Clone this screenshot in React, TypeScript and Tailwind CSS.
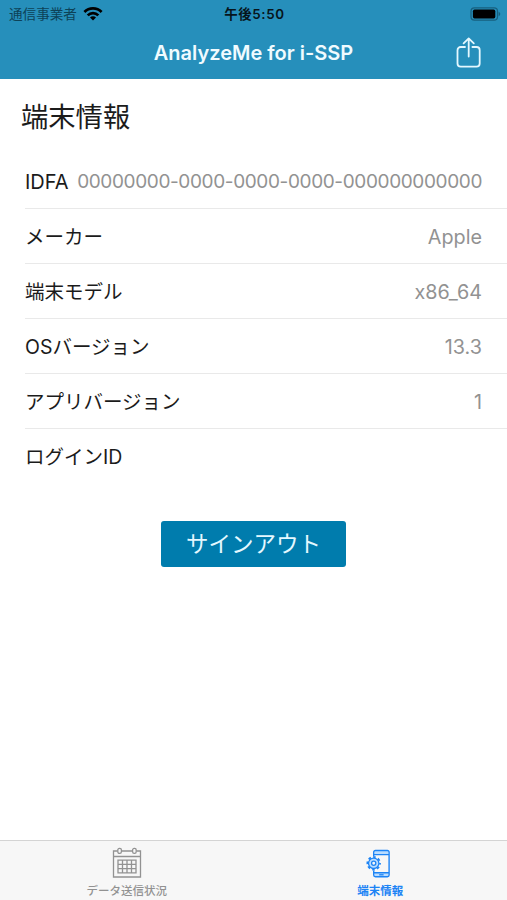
const rows = [
  { label: "IDFA", value: "00000000-0000-0000-0000-000000000000" },
  { label: "メーカー", value: "Apple" },
  { label: "端末モデル", value: "x86_64" },
  { label: "OSバージョン", value: "13.3" },
  { label: "アプリバージョン", value: "1" },
  { label: "ログインID", value: "" },
]

function WifiIcon() {
  return (
    <svg width="20" height="14" viewBox="0 0 20 14" fill="none" stroke="#000" strokeWidth="2.7">
      <path d="M1.4 5a12.2 12.2 0 0 1 17.2 0" />
      <path d="M4.7 8.4a7.5 7.5 0 0 1 10.6 0" />
      <path d="M10 13.6 7 10.6a4.2 4.2 0 0 1 6 0z" fill="#000" stroke="none" />
    </svg>
  )
}

function BatteryIcon() {
  return (
    <svg width="31" height="14" viewBox="0 0 31 14">
      <rect x="1" y="0.8" width="26.5" height="12.4" rx="3.4" fill="none" stroke="#17607f" strokeWidth="1.2" />
      <rect x="2.9" y="2.6" width="22.4" height="8.8" rx="1.6" fill="#000" />
      <path d="M28.6 4.8c2.2.9 2.2 3.5 0 4.4z" fill="#17607f" />
    </svg>
  )
}

function ShareIcon() {
  return (
    <svg width="26" height="32" viewBox="0 0 26 32" fill="none" stroke="#e4f8ff" strokeWidth="1.8" strokeLinecap="round" strokeLinejoin="round">
      <path d="M9 10H4.7A3.2 3.2 0 0 0 1.5 13.2v13.3a3.2 3.2 0 0 0 3.2 3.2h15.8a3.2 3.2 0 0 0 3.2-3.2V13.2a3.2 3.2 0 0 0-3.2-3.2H16.4" />
      <path d="M12.7 19.5V1.5M7.6 6.4l5.1-5 5.1 5" />
    </svg>
  )
}

function CalendarIcon() {
  return (
    <svg width="30" height="32" viewBox="0 0 30 32" fill="none" stroke="#929292" strokeWidth="1.3">
      <path d="M5.5 4H1.5v26h27V4h-4M9.5 4h11M1.5 9.5h27" />
      <rect x="5.8" y="1.4" width="3.6" height="5" rx="1.6" />
      <rect x="20.6" y="1.4" width="3.6" height="5" rx="1.6" />
      <path d="M6 13.2h18v12.6H6zM10.5 13.2v12.6M15 13.2v12.6M19.5 13.2v12.6M6 17.4h18M6 21.6h18" />
    </svg>
  )
}

function DeviceIcon() {
  return (
    <svg width="28" height="30" viewBox="0 0 28 30" fill="none" stroke="#1d84f5" strokeWidth="1.4">
      <path d="M8.5 1.8h13.8v3.6H8.5zM8.5 24h13.8v3.4H8.5z" fill="#b9dcff" stroke="none" />
      <path d="M7.7 7V3.2a1.7 1.7 0 0 1 1.7-1.7h12a1.7 1.7 0 0 1 1.7 1.7v22.8a1.7 1.7 0 0 1-1.7 1.7h-12A1.7 1.7 0 0 1 7.7 26v-4.4" />
      <path d="M7.9 5.6H23M7.9 23.8H23" />
      <path d="M13.2 25.8h4.4" strokeWidth="1.3" />
      <circle cx="7.7" cy="14.3" r="5.2" fill="#b9dcff" strokeWidth="1.3" />
      <circle cx="7.7" cy="14.3" r="2.1" fill="#f7f7f7" strokeWidth="1.3" />
      <circle cx="7.7" cy="14.3" r="6.3" strokeWidth="1.8" strokeDasharray="2.6 2.348" strokeDashoffset="1.3" />
    </svg>
  )
}

export default function App() {
  return (
    <div className="flex h-[900px] w-[507px] flex-col overflow-hidden bg-white font-['Inter','Noto_Sans_CJK_JP',sans-serif] text-[#1b1b1b]">
      <header className="h-[79px] shrink-0 bg-[#268fbb]">
        <div className="grid h-[27px] grid-cols-[1fr_auto_1fr] items-center pr-1.5 pl-[9px]">
          <div className="flex items-center gap-1.5">
            <span className="text-[13.6px] leading-5 text-[#0d4257]">通信事業者</span>
            <WifiIcon />
          </div>
          <span className="pr-px text-[13.4px] leading-5 font-semibold tracking-[0.6px] text-[#06151c]">午後5:50</span>
          <div className="flex justify-end">
            <BatteryIcon />
          </div>
        </div>
        <div className="grid h-[51px] grid-cols-[1fr_auto_1fr] items-center pr-[25px] pl-[25px]">
          <span />
          <h1 className="text-[20px] leading-6 font-semibold text-[#f0fbff]">AnalyzeMe for i-SSP</h1>
          <div className="flex justify-end">
            <ShareIcon />
          </div>
        </div>
      </header>

      <main className="flex grow flex-col">
        <h2 className="mt-[19px] ml-[21px] text-[27.3px] leading-10">端末情報</h2>
        <ul className="mt-4 ml-[25px]">
          {rows.map((row) => (
            <li
              key={row.label}
              className="group flex h-[55px] items-center justify-between border-b border-[#e9e9e9] pt-px pr-[25px] last:border-b-0"
            >
              <span className="text-[19.5px] leading-7 whitespace-nowrap group-first:text-[20px]">{row.label}</span>
              <span className="text-[19.8px] leading-7 whitespace-nowrap text-[#929292] group-first:text-[19px] group-first:tracking-[-0.38px]">
                {row.value}
              </span>
            </li>
          ))}
        </ul>
        <button className="mx-auto mt-[37px] h-[46px] w-[185px] rounded-[3px] bg-[#007cad] text-[22.5px] leading-[46px] text-[#e4f8ff]">
          サインアウト
        </button>
      </main>

      <nav className="grid h-[60px] shrink-0 grid-cols-2 border-t border-[#d4d4d4] bg-[#f7f7f7] text-[11.5px]">
        <div className="flex flex-col items-center pt-1.5 text-[#929292]">
          <CalendarIcon />
          <span className="mt-1 leading-4 font-medium">データ送信状況</span>
        </div>
        <div className="flex flex-col items-center pt-2 text-[#1d84f5]">
          <DeviceIcon />
          <span className="mt-1 leading-4 font-bold">端末情報</span>
        </div>
      </nav>
    </div>
  )
}
